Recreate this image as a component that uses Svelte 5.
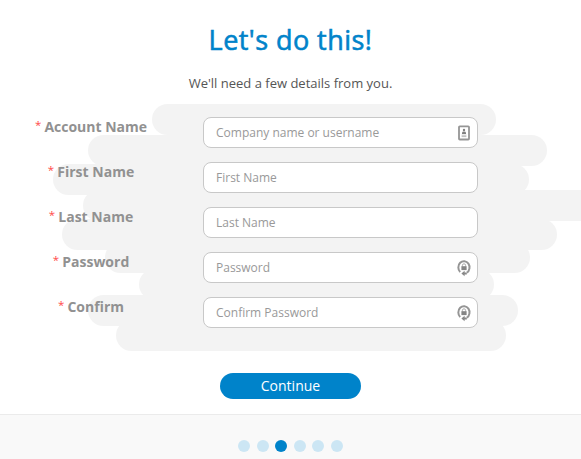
<script lang="ts">
	type Icon = 'card' | 'lock' | null;

	const fields: { id: string; label: string; placeholder: string; type: string; icon: Icon }[] = [
		{ id: 'account', label: 'Account Name', placeholder: 'Company name or username', type: 'text', icon: 'card' },
		{ id: 'first', label: 'First Name', placeholder: 'First Name', type: 'text', icon: null },
		{ id: 'last', label: 'Last Name', placeholder: 'Last Name', type: 'text', icon: null },
		{ id: 'password', label: 'Password', placeholder: 'Password', type: 'password', icon: 'lock' },
		{ id: 'confirm', label: 'Confirm', placeholder: 'Confirm Password', type: 'password', icon: 'lock' }
	];

	// left, right and top of each rounded band behind the form
	const bands = [
		[152, 496, 104],
		[88, 547, 135],
		[53, 529, 164],
		[83, 620, 190],
		[62, 557, 219],
		[105, 530, 242],
		[139, 494, 269],
		[88, 518, 295],
		[116, 506, 320]
	];

	const steps = 6;
	let current = $state(2);
</script>

<div class="page">
	<svg class="backdrop" width="581" height="414" aria-hidden="true">
		{#each bands as [left, right, top]}
			<rect x={left} y={top} width={right - left} height="31" rx="15.5" />
		{/each}
	</svg>

	<main>
		<h1>Let's do this!</h1>
		<p class="intro">We'll need a few details from you.</p>

		<form onsubmit={(e) => e.preventDefault()}>
			{#each fields as field (field.id)}
				<div class="row">
					<label for={field.id}><span class="required">*</span> {field.label}</label>
					<div class="control">
						<input id={field.id} type={field.type} placeholder={field.placeholder} />
						{#if field.icon === 'card'}
							<svg class="icon" width="14" height="18" viewBox="0 0 14 18">
								<rect x="2" y="2.3" width="10" height="13.2" rx="0.8" fill="#fff" stroke="#959595" stroke-width="1.8" />
								<circle cx="7" cy="6" r="1.2" fill="#808080" />
								<path d="M5 10V8.8Q5 7.4 7 7.4T9 8.8V10Z" fill="#808080" />
								<path d="M4.6 11.2H9.4M4.6 12.6H9.4" stroke="#bbb" stroke-width="1" />
							</svg>
						{:else if field.icon === 'lock'}
							<svg class="icon" width="14" height="18" viewBox="0 0 14 18">
								<path d="M3.2 13A5.6 6.2 0 1 1 9.8 13.7" fill="none" stroke="#959595" stroke-width="2" />
								<path d="M4.4 14.4L7.6 11.7V13.4H9.8V15.4H7.6V17.2Z" fill="#888" />
								<path d="M5.4 7.6V6.3Q5.4 4.8 7 4.8T8.6 6.3V7.6" fill="none" stroke="#aaa" stroke-width="1" />
								<rect x="4.4" y="7.2" width="5.2" height="3.9" fill="#858585" />
							</svg>
						{/if}
					</div>
				</div>
			{/each}
			<button type="submit">Continue</button>
		</form>
	</main>

	<footer>
		{#each Array(steps) as _, i}
			<button
				class="dot"
				class:active={i === current}
				aria-label="Step {i + 1}"
				onclick={() => (current = i)}
			></button>
		{/each}
	</footer>
</div>

<style>
	:global(body) {
		margin: 0;
		background: #fff;
	}
	.page {
		position: relative;
		display: flex;
		flex-direction: column;
		width: 581px;
		height: 459px;
		overflow: hidden;
		font-family: 'Open Sans', sans-serif;
	}
	.backdrop {
		position: absolute;
		top: 0;
		left: 0;
		fill: #f3f3f3;
	}
	main {
		position: relative;
		height: 414px;
		box-sizing: border-box;
		padding-top: 22px;
	}
	h1 {
		margin: 0;
		color: #0083ca;
		font-size: 27px;
		font-weight: 400;
		line-height: 36px;
		letter-spacing: 0.45px;
		text-align: center;
		-webkit-text-stroke: 0.6px #0083ca;
	}
	.intro {
		margin: 15px 0 0;
		color: #555;
		font-size: 13px;
		line-height: 20px;
		text-align: center;
	}
	form {
		display: flex;
		flex-direction: column;
		gap: 14px;
		margin-top: 24px;
	}
	.row {
		display: flex;
		gap: 21px;
		height: 31px;
	}
	label {
		width: 182px;
		color: #919191;
		font-size: 14px;
		font-weight: 700;
		line-height: 20px;
		text-align: center;
		white-space: nowrap;
	}
	.required {
		margin-right: -0.5px;
		color: #ff4a4a;
		font-weight: 400;
		font-size: 11.5px;
		line-height: 1;
		vertical-align: 3px;
	}
	.control {
		position: relative;
		width: 275px;
	}
	input {
		display: block;
		box-sizing: border-box;
		width: 100%;
		height: 31px;
		padding: 0 30px 0 12px;
		border: 1px solid #c8c8c8;
		border-radius: 8px;
		background: #fff;
		color: #555;
		font: 12px 'Open Sans', sans-serif;
		outline: none;
	}
	input::placeholder {
		color: #999;
		opacity: 1;
	}
	.icon {
		position: absolute;
		top: 7px;
		right: 7px;
	}
	form > button {
		width: 141px;
		height: 26px;
		margin: 31px 0 0 220px;
		padding: 0 0 2px;
		border: 0;
		border-radius: 13px;
		background: #0083ca;
		color: #fff;
		font: 14px 'Open Sans', sans-serif;
		cursor: pointer;
	}
	footer {
		position: relative;
		display: flex;
		justify-content: center;
		gap: 6.6px;
		height: 45px;
		box-sizing: border-box;
		padding-top: 25px;
		border-top: 1px solid #ebebeb;
		background: #f9f9f9;
	}
	.dot {
		width: 12px;
		height: 12px;
		padding: 0;
		border: 0;
		border-radius: 50%;
		background: #cce6f4;
		cursor: pointer;
	}
	.dot.active {
		background: #0083ca;
	}
</style>
